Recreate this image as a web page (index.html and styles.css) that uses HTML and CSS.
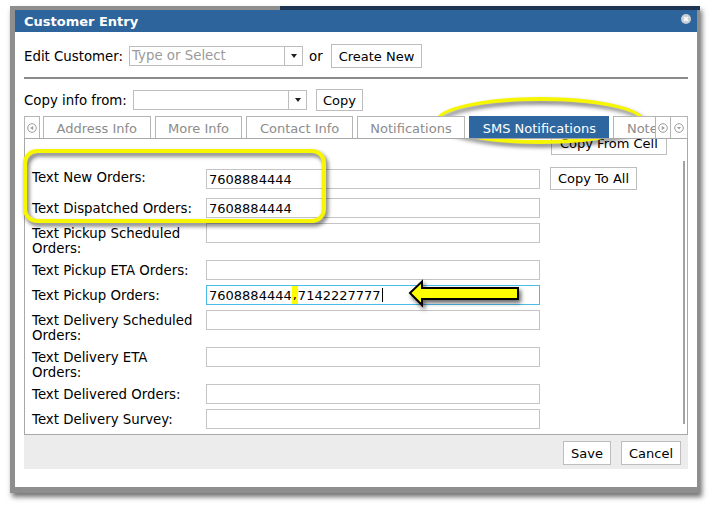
FILE: index.html
```html
<html>
  <head>
    <title>Customer Entry</title>
    <link rel="stylesheet" href="styles.css">
  </head>

  <body>
    <div class="frame">
      <div class="dialog">
        <div class="titleBar">
          <span class="title">Customer Entry</span>
          <span class="closeBtn">
            <svg width="10" height="10" viewBox="0 0 10 10">
              <circle cx="5" cy="5" r="5" fill="#c9ced4"/>
              <path d="M3 3 L7 7 M7 3 L3 7" stroke="#fff" stroke-width="1.6"/>
            </svg>
          </span>
        </div>

        <div class="content">
          <div class="row editRow">
            <span class="rowLabel">Edit Customer:</span>
            <div class="combo">
              <span class="comboText placeholder">Type or Select</span>
              <span class="comboArrow"></span>
            </div>
            <span class="or">or</span>
            <button class="button tall">Create New</button>
          </div>

          <div class="separator"></div>

          <div class="row copyRow">
            <span class="rowLabel">Copy info from:</span>
            <div class="combo">
              <span class="comboText"></span>
              <span class="comboArrow"></span>
            </div>
            <button class="button short">Copy</button>
          </div>

          <div class="tabStrip">
            <div class="tabScroll">
              <svg width="10" height="10" viewBox="0 0 10 10">
                <circle cx="5" cy="5" r="4.3" fill="none" stroke="#9a9a9a"/>
                <path d="M3.2 5 L6.2 3 L6.2 7 Z" fill="#9a9a9a"/>
              </svg>
            </div>
            <div class="tabs">
              <div class="tab">Address Info</div>
              <div class="tab">More Info</div>
              <div class="tab">Contact Info</div>
              <div class="tab">Notifications</div>
              <div class="tab active">SMS Notifications</div>
              <div class="tab">Notes</div>
            </div>
            <div class="tabScroll">
              <svg width="10" height="10" viewBox="0 0 10 10">
                <circle cx="5" cy="5" r="4.3" fill="none" stroke="#9a9a9a"/>
                <path d="M6.8 5 L3.8 3 L3.8 7 Z" fill="#9a9a9a"/>
              </svg>
            </div>
            <div class="tabScroll menu">
              <svg width="10" height="10" viewBox="0 0 10 10">
                <circle cx="5" cy="5" r="4.3" fill="none" stroke="#9a9a9a"/>
                <path d="M3 4 L7 4 L5 6.6 Z" fill="#9a9a9a"/>
              </svg>
            </div>
          </div>

          <div class="panel">
            <div class="fieldGrid">
              <button class="button cellBtn">Copy From Cell</button>

              <span class="fieldLabel">Text New Orders:</span>
              <input class="field first" value="7608884444">
              <button class="button toAllBtn">Copy To All</button>

              <span class="fieldLabel">Text Dispatched Orders:</span>
              <input class="field" value="7608884444">

              <span class="fieldLabel">Text Pickup Scheduled Orders:</span>
              <input class="field" value="">

              <span class="fieldLabel">Text Pickup ETA Orders:</span>
              <input class="field" value="">

              <span class="fieldLabel">Text Pickup Orders:</span>
              <div class="field focused">7608884444<span class="mark">,</span>7142227777<span class="caret"></span></div>

              <span class="fieldLabel">Text Delivery Scheduled Orders:</span>
              <input class="field" value="">

              <span class="fieldLabel">Text Delivery ETA Orders:</span>
              <input class="field" value="">

              <span class="fieldLabel">Text Delivered Orders:</span>
              <input class="field" value="">

              <span class="fieldLabel">Text Delivery Survey:</span>
              <input class="field" value="">
            </div>
            <div class="scrollThumb"></div>
          </div>

          <div class="footer">
            <button class="button tall">Save</button>
            <button class="button tall">Cancel</button>
          </div>
        </div>
      </div>
    </div>

    <!-- highlight marks drawn over the screenshot -->
    <div class="callout box"></div>
    <div class="callout ring"></div>
    <svg class="arrow" width="116" height="30" viewBox="0 0 116 30">
      <polygon points="3,14 15,2.5 15,9 111,9 111,20 15,20 15,26" fill="#ffff00" stroke="#000" stroke-width="2" stroke-linejoin="miter"/>
    </svg>
  </body>
</html>
```

FILE: styles.css
```css
body {
  margin: 0;
  position: relative;
  background-color: #ffffff;
  font-family: "DejaVu Sans", Verdana, sans-serif;
  font-size: 13px;
  color: #000000;
}

.frame {
  margin: 6px 0 0 10px;
  width: 690px;
  height: 487px;
  box-sizing: border-box;
  padding: 4px 3px 6px 5px;
  background: linear-gradient(to right, #8e8e8e 270px, #1d3553 270px) top / 100% 4px no-repeat, #8e8e8e;
  box-shadow: 2px 4px 5px rgba(0,0,0,0.55);
}

.dialog {
  height: 100%;
  background-color: #ffffff;
  display: flex;
  flex-direction: column;
}

.titleBar {
  height: 22px;
  background-color: #2c649b;
  display: flex;
  align-items: center;
  justify-content: space-between;
  padding: 1px 6px 0 9px;
  box-sizing: border-box;
}

.title {
  color: #ffffff;
  font-weight: bold;
  font-size: 13px;
}

.closeBtn {
  display: flex;
  margin-top: -6px;
}

.content {
  padding: 12px 9px 18px 9px;
  display: flex;
  flex-direction: column;
}

.row {
  display: flex;
  align-items: center;
}

.rowLabel {
  font-size: 13.33px;
  white-space: nowrap;
}

.editRow {
  height: 24px;
}

.editRow .rowLabel {
  width: 105px;
}

.copyRow {
  height: 22px;
  margin-top: 10px;
}

.copyRow .rowLabel {
  width: 109px;
}

.combo {
  display: flex;
  height: 20px;
  box-sizing: border-box;
  border: 1px solid #bdbdbd;
  width: 174px;
}

.comboText {
  flex: 1;
  padding-left: 2px;
  line-height: 18px;
  font-size: 13.33px;
}

.placeholder {
  color: #9a9a9a;
}

.comboArrow {
  width: 17px;
  border-left: 1px solid #bdbdbd;
  position: relative;
}

.comboArrow::after {
  content: "";
  position: absolute;
  left: 6px;
  top: 7px;
  border-left: 3px solid transparent;
  border-right: 3px solid transparent;
  border-top: 4px solid #222222;
}

.or {
  font-size: 13.33px;
  margin: 0 8px 0 6px;
}

.button {
  font-family: "DejaVu Sans", Verdana, sans-serif;
  font-size: 13px;
  color: #000000;
  background-color: #ffffff;
  border: 1px solid #bdbdbd;
  border-radius: 0;
  padding: 0 7px;
  height: 23px;
}

.tall {
  height: 24px;
}

.short {
  height: 22px;
  margin-left: 9px;
  padding: 0 6px;
}

.separator {
  margin-top: 9px;
  border-top: 2px solid #8a8a8a;
}

.tabStrip {
  margin-top: 5px;
  height: 23px;
  box-sizing: border-box;
  border-bottom: 1px solid #a8a8a8;
  background-color: #ffffff;
  display: flex;
  position: relative;
  z-index: 2;
}

.tabScroll {
  width: 16px;
  box-sizing: border-box;
  border: 1px solid #b5b5b5;
  border-bottom: 0;
  display: flex;
  align-items: center;
  justify-content: center;
}

.tabScroll.menu {
  width: 17px;
  border-left: 0;
}

.tabs {
  flex: 1;
  display: flex;
  gap: 4px;
  overflow: hidden;
  margin-left: 3px;
}

.tab {
  flex-shrink: 0;
  height: 22px;
  box-sizing: border-box;
  border: 1px solid #b5b5b5;
  border-bottom: 0;
  padding: 1px 12.5px 0 12.5px;
  line-height: 21px;
  color: #8c8c8c;
}

.tab.active {
  background-color: #2e67a0;
  border-color: #2e67a0;
  color: #ffffff;
}

.panel {
  margin-top: -1px;
  height: 297px;
  box-sizing: border-box;
  border: 1px solid #a8a8a8;
  position: relative;
}

.fieldGrid {
  display: grid;
  grid-template-columns: 174px 344px 1fr;
  row-gap: 5px;
  align-items: start;
  padding-left: 7px;
}

.cellBtn {
  grid-column: 3;
  justify-self: start;
  height: 24px;
  padding: 0 8px;
  margin: -8px 0 7px 1px;
}

.toAllBtn {
  justify-self: start;
  margin-bottom: 3px;
}

.fieldLabel {
  grid-column: 1;
  padding-top: 3px;
  margin-bottom: -1px;
  line-height: 15px;
  font-size: 13.33px;
  padding-right: 8px;
}

.field {
  grid-column: 2;
  width: 334px;
  height: 20px;
  box-sizing: border-box;
  border: 1px solid #c4c4c4;
  padding: 0 2px;
  margin: 0;
  font-family: "DejaVu Sans", Verdana, sans-serif;
  font-size: 13px;
  color: #000000;
  outline: none;
}

.field.first {
  margin-top: 2px;
}

.field.focused {
  border-color: #4cbbe8;
  display: flex;
  align-items: center;
  white-space: pre;
}

.mark {
  background-color: #ffff00;
  height: 18px;
  line-height: 18px;
  padding: 0 1px;
}

.caret {
  width: 1px;
  height: 14px;
  background-color: #000000;
  margin-left: 1px;
}

.scrollThumb {
  position: absolute;
  right: 2px;
  top: 22px;
  bottom: 10px;
  width: 2px;
  background-color: #a3a3a3;
}

.footer {
  height: 34px;
  box-sizing: border-box;
  background-color: #ececec;
  display: flex;
  justify-content: flex-end;
  align-items: flex-start;
  gap: 10px;
  padding: 6px 7px 0 0;
}

.callout {
  position: absolute;
  box-sizing: border-box;
  border: 4px solid #f6f600;
  filter: drop-shadow(2px 3px 2px rgba(0,0,0,0.6));
}

.callout.box {
  left: 23px;
  top: 149px;
  width: 303px;
  height: 74px;
  border-radius: 14px;
}

.callout.ring {
  left: 436px;
  top: 97px;
  width: 208px;
  height: 47px;
  border-radius: 50%;
}

.arrow {
  position: absolute;
  left: 407px;
  top: 279px;
  filter: drop-shadow(2px 3px 2px rgba(0,0,0,0.6));
}
```
